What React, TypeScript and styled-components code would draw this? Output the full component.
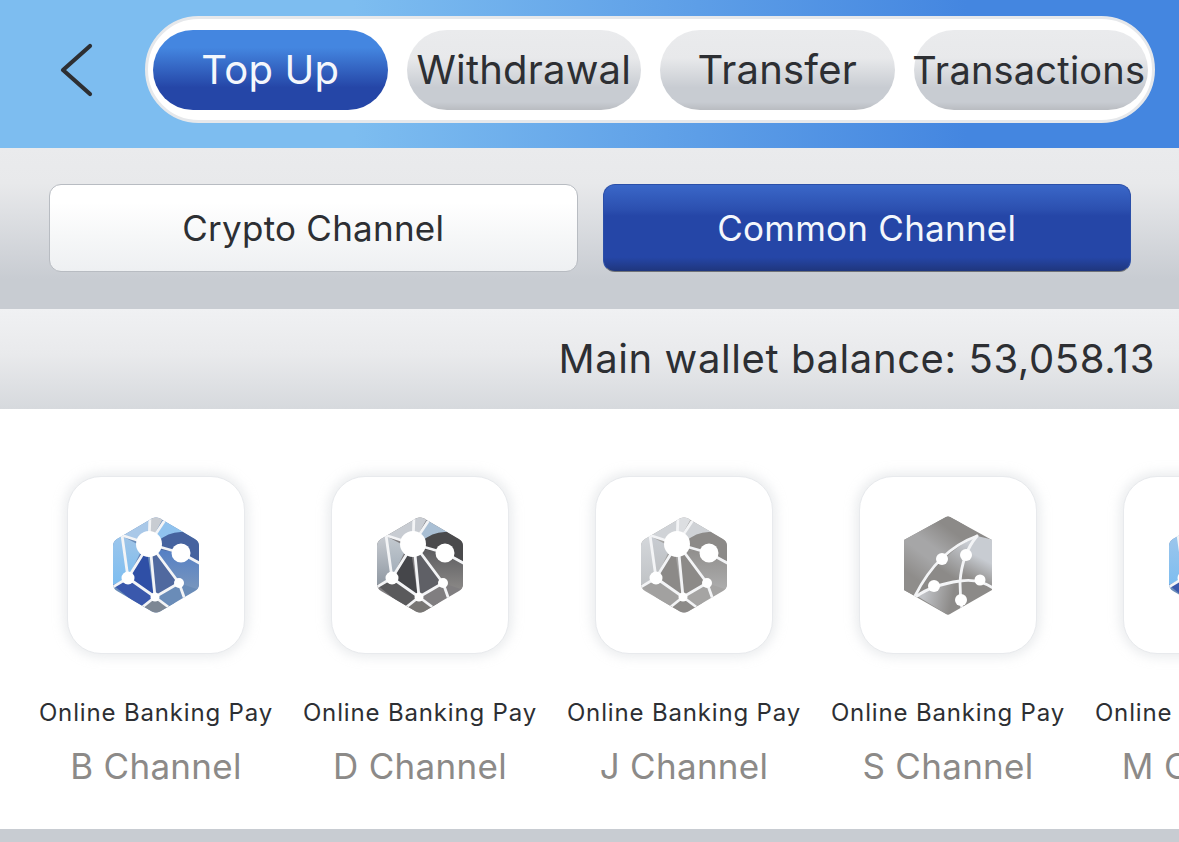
import React from "react";
import styled, { createGlobalStyle } from "styled-components";

const Global = createGlobalStyle`
  html, body { margin: 0; padding: 0; background: #c8ccd2; }
  * { box-sizing: border-box; }
  body { font-family: Inter, "Noto Sans", "Liberation Sans", sans-serif; overflow: hidden; }
`;

const Page = styled.div`
  width: 1179px;
  height: 842px;
  overflow: hidden;
  display: flex;
  flex-direction: column;
  background: #c8ccd2;
`;

const Header = styled.header`
  height: 148px;
  flex: none;
  display: flex;
  align-items: center;
  padding: 16px 24px 25px 59px;
  gap: 52px;
  background: linear-gradient(90deg, #7dbdf0 0%, #7dbdf0 30%, #4486e0 82%, #4486e0 100%);
`;

const BackIcon = styled.svg`
  width: 34px;
  height: 54px;
  flex: none;
`;

const TabBar = styled.nav`
  width: 1010px;
  height: 107px;
  flex: none;
  display: grid;
  grid-template-columns: repeat(4, minmax(0, 1fr));
  gap: 19px;
  padding: 11px 4px 10px 5px;
  background: #fff;
  border: 3px solid #e6e8eb;
  border-radius: 54px;
`;

const Tab = styled.div<{ $active?: boolean; $compact?: boolean }>`
  border-radius: 40px;
  display: flex;
  align-items: center;
  justify-content: center;
  white-space: nowrap;
  font-size: ${(p) => (p.$compact ? "38px" : "40px")};
  line-height: 1;
  padding-right: ${(p) => (p.$compact ? "4px" : "0")};
  letter-spacing: 0.2px;
  color: ${(p) => (p.$active ? "#f4f7fc" : "#2d2f33")};
  background: ${(p) =>
    p.$active
      ? "linear-gradient(180deg, #4486e0 0%, #4486e0 22%, #2546a7 72%, #2546a7 100%)"
      : "linear-gradient(180deg, #eaebed 0%, #e8e9eb 35%, #c8ccd2 72%, #c8ccd2 90%, #b9bcc1 100%)"};
`;

const ChannelBar = styled.section`
  height: 160px;
  flex: none;
  display: grid;
  grid-template-columns: 1fr 1fr;
  gap: 25px;
  padding: 36px 48px 36px 49px;
  background: linear-gradient(180deg, #eaebed 0%, #e8e9eb 22%, #c8ccd2 82%, #c8ccd2 100%);
`;

const ChannelButton = styled.div<{ $active?: boolean }>`
  border-radius: 12px;
  display: flex;
  align-items: center;
  justify-content: center;
  font-size: 35px;
  line-height: 1;
  padding-top: 1px;
  letter-spacing: 0.25px;
  color: ${(p) => (p.$active ? "#f4f7fc" : "#2d2f33")};
  border: 1px solid ${(p) => (p.$active ? "#2b4fa8" : "#b8bcc2")};
  border-bottom-color: ${(p) => (p.$active ? "#6f7278" : "#b8bcc2")};
  background: ${(p) =>
    p.$active
      ? "linear-gradient(180deg, #3a67c8 0%, #2c50b0 28%, #2546a7 36%, #2546a7 84%, #1f367d 100%)"
      : "linear-gradient(180deg, #ffffff 0%, #ffffff 20%, #f6f7f8 60%, #eef0f2 100%)"};
`;

const BalanceBar = styled.section`
  height: 100px;
  flex: none;
  display: flex;
  align-items: center;
  justify-content: flex-end;
  padding: 0 24px 2px 0;
  margin-top: 1px;
  font-size: 40px;
  letter-spacing: 0.6px;
  color: #2d2f33;
  background: linear-gradient(180deg, #f0f1f3 0%, #e9eaec 45%, #d6d9dd 100%);
`;

const ChannelList = styled.section`
  height: 420px;
  flex: none;
  display: grid;
  grid-template-columns: repeat(5, 264px);
  padding: 67px 0 0 24px;
  background: #fff;
  overflow: hidden;
`;

const ChannelItem = styled.article`
  display: flex;
  flex-direction: column;
  align-items: center;
`;

const IconCard = styled.div`
  width: 178px;
  height: 178px;
  display: flex;
  align-items: center;
  justify-content: center;
  background: #fff;
  border: 1px solid #e8eaed;
  border-radius: 34px;
  box-shadow: 0 0 12px 3px rgba(200, 204, 210, 0.4);
`;

const ChannelType = styled.div`
  margin-top: 44px;
  font-size: 24px;
  line-height: 30px;
  letter-spacing: 0.84px;
  white-space: nowrap;
  color: #2d2f33;
`;

const ChannelName = styled.div`
  margin-top: 18px;
  font-size: 35px;
  line-height: 40px;
  letter-spacing: 0.3px;
  white-space: nowrap;
  color: #8c8a88;
`;

type Palette = {
  top: string;
  corner: string;
  upperRight: string;
  left: [string, string];
  inner: [string, string];
  center: string;
  centerRight: string;
  ring: string;
  right: [string, string];
  lowerLeft: string;
  lowerRight: string;
  bottom: string;
};

const palettes: Record<string, Palette> = {
  blue: {
    top: "#c8ccd2",
    corner: "#a9c8e8",
    upperRight: "#8fc2ee",
    left: ["#9cc6ec", "#7dbdf0"],
    inner: ["#a0c4e6", "#7dbdf0"],
    center: "#2f4fa6",
    centerRight: "#50699f",
    ring: "#46639f",
    right: ["#4f7cc6", "#7a97bd"],
    lowerLeft: "#3a58ac",
    lowerRight: "#6a8cb8",
    bottom: "#7d8794",
  },
  dark: {
    top: "#c8ccd2",
    corner: "#c8ccd2",
    upperRight: "#a9bfd4",
    left: ["#c8ccd2", "#8f98a2"],
    inner: ["#c4cad0", "#9eaab6"],
    center: "#45464a",
    centerRight: "#5f6066",
    ring: "#4a4a4c",
    right: ["#56565a", "#8c8a88"],
    lowerLeft: "#5a5a5c",
    lowerRight: "#807e80",
    bottom: "#787674",
  },
  grey: {
    top: "#dcdee1",
    corner: "#d0d3d7",
    upperRight: "#cfd2d6",
    left: ["#d4d7db", "#c0c3c6"],
    inner: ["#c8ccd2", "#bdbfc1"],
    center: "#8c8a88",
    centerRight: "#8c8a88",
    ring: "#8c8a88",
    right: ["#8c8a88", "#aeaeae"],
    lowerLeft: "#a2a1a0",
    lowerRight: "#a5a4a3",
    bottom: "#8c8a88",
  },
};

const HEX_PATH =
  "M39 1.5 Q43 -0.5 47 1.5 L82 22 Q86 24.5 86 29 L86 67 Q86 71.5 82 74 L47 94.5 Q43 96.5 39 94.5 L4 74 Q0 71.5 0 67 L0 29 Q0 24.5 4 22 Z";

const MeshIcon: React.FC<{ id: string; palette: Palette }> = ({ id, palette: p }) => (
  <svg width="86" height="96" viewBox="0 0 86 96" aria-hidden="true">
    <defs>
      <clipPath id={`${id}-clip`}>
        <path d={HEX_PATH} />
      </clipPath>
      <linearGradient id={`${id}-left`} x1="0" y1="0" x2="0" y2="1">
        <stop offset="0" stopColor={p.left[0]} />
        <stop offset="1" stopColor={p.left[1]} />
      </linearGradient>
      <linearGradient id={`${id}-inner`} x1="0" y1="0" x2="0" y2="1">
        <stop offset="0" stopColor={p.inner[0]} />
        <stop offset="1" stopColor={p.inner[1]} />
      </linearGradient>
      <linearGradient id={`${id}-right`} x1="0" y1="0" x2="0" y2="1">
        <stop offset="0" stopColor={p.right[0]} />
        <stop offset="1" stopColor={p.right[1]} />
      </linearGradient>
    </defs>
    <g clipPath={`url(#${id}-clip)`}>
      <rect width="86" height="96" fill={p.lowerRight} />
      <polygon points="0,20 38,-2 36,27 9,19" fill={p.corner} />
      <polygon points="38,-2 52,-2 36,27" fill={p.top} />
      <polygon points="52,0 72,14 46,24 40,20" fill={p.upperRight} />
      <polygon points="0,20 9,19 15,61 0,68" fill={`url(#${id}-left)`} />
      <polygon points="9,19 30,30 15,61" fill={`url(#${id}-inner)`} />
      <path d="M44 25 Q56 14 70 15 L90 27 L90 46 L68 36 L47 33 Z" fill={p.ring} />
      <polygon points="47,33 68,36 90,46 90,74 66,66 36,27" fill={`url(#${id}-right)`} />
      <polygon points="33,27 41,80 15,61" fill={p.center} />
      <polygon points="36,27 66,66 42,80" fill={p.centerRight} />
      <polygon points="0,68 15,61 42,80 27,90" fill={p.lowerLeft} />
      <polygon points="27,90 42,80 58,90 43,100" fill={p.bottom} />
      <polygon points="42,80 66,66 71,76 58,90" fill={p.lowerRight} />
      <g stroke="#f3f4f6" strokeWidth="2.8" fill="none" strokeLinecap="round">
        <line x1="36" y1="27" x2="37" y2="-2" />
        <line x1="36" y1="27" x2="52" y2="3" />
        <line x1="36" y1="27" x2="8" y2="18" />
        <line x1="0" y1="21" x2="9" y2="18" />
        <line x1="9" y1="18" x2="15" y2="61" />
        <line x1="36" y1="27" x2="15" y2="61" />
        <line x1="37" y1="27" x2="42" y2="80" />
        <line x1="37" y1="27" x2="66" y2="66" />
        <line x1="40" y1="28" x2="68" y2="36" />
        <line x1="68" y1="36" x2="90" y2="48" />
        <line x1="15" y1="61" x2="42" y2="80" />
        <line x1="42" y1="80" x2="66" y2="66" />
        <line x1="15" y1="61" x2="-2" y2="71" />
        <line x1="42" y1="80" x2="27" y2="92" />
        <line x1="42" y1="80" x2="58" y2="92" />
        <line x1="66" y1="66" x2="71" y2="80" />
      </g>
      <g fill="#ffffff">
        <circle cx="36" cy="27" r="13" />
        <circle cx="68" cy="36" r="9.5" />
        <circle cx="15" cy="61" r="6.5" />
        <circle cx="66" cy="66" r="5" />
        <circle cx="42" cy="80" r="4.5" />
      </g>
    </g>
  </svg>
);

const SCurveIcon: React.FC = () => (
  <svg width="88" height="99" viewBox="0 0 88 99" aria-hidden="true">
    <defs>
      <clipPath id="s-clip">
        <path d="M42 1 Q44 0 46 1 L88 24 L88 74 L46 98 Q44 99 42 98 L0 74 L0 24 Z" />
      </clipPath>
      <linearGradient id="s-band" gradientUnits="userSpaceOnUse" x1="44" y1="12" x2="8" y2="60">
        <stop offset="0" stopColor="#8c8a88" />
        <stop offset="0.4" stopColor="#a6a6a7" />
        <stop offset="0.6" stopColor="#a6a6a7" />
        <stop offset="1" stopColor="#8f8d8b" />
      </linearGradient>
      <linearGradient id="s-right" gradientUnits="userSpaceOnUse" x1="80" y1="26" x2="62" y2="60">
        <stop offset="0" stopColor="#c8ccd2" />
        <stop offset="0.4" stopColor="#c8ccd2" />
        <stop offset="1" stopColor="#8f8d8b" />
      </linearGradient>
      <linearGradient id="s-mid" gradientUnits="userSpaceOnUse" x1="65" y1="28" x2="42" y2="62">
        <stop offset="0" stopColor="#c8ccd2" />
        <stop offset="0.9" stopColor="#8c8a88" />
      </linearGradient>
      <linearGradient id="s-low" gradientUnits="userSpaceOnUse" x1="20" y1="78" x2="48" y2="84">
        <stop offset="0" stopColor="#c0c2c6" />
        <stop offset="1" stopColor="#8c8a88" />
      </linearGradient>
    </defs>
    <g clipPath="url(#s-clip)">
      <rect width="88" height="99" fill="#8c8a88" />
      <path d="M-2 74 L-2 22 L44 -2 L74 18 Q32 34 12 80 Z" fill="url(#s-band)" />
      <path d="M73 20 Q38 36 13 79 Q30 68 56 65 Q58 38 73 20 Z" fill="url(#s-mid)" />
      <path d="M73 20 L90 24 L90 72 Q72 63 56 65 Q58 38 73 20 Z" fill="url(#s-right)" />
      <path d="M13 80 Q32 68 56 65 L56 90 L44 99 Z" fill="url(#s-low)" />
      <g stroke="#f3f4f6" strokeWidth="2.8" fill="none" strokeLinecap="round">
        <path d="M73 20 Q34 34 11 80" />
        <path d="M73 20 Q58 38 56 66 Q56 80 58 93" />
        <path d="M13 80 Q28 69 56 65 Q74 62 89 72" />
      </g>
      <g fill="#ffffff">
        <circle cx="38" cy="43" r="6" />
        <circle cx="62" cy="39" r="6" />
        <circle cx="30" cy="70" r="6" />
        <circle cx="76" cy="64" r="5.5" />
        <circle cx="57" cy="84" r="6" />
      </g>
    </g>
  </svg>
);

const tabs = [
  { label: "Top Up", active: true },
  { label: "Withdrawal" },
  { label: "Transfer" },
  { label: "Transactions", compact: true },
];

const channels: { name: string; icon: React.ReactNode }[] = [
  { name: "B Channel", icon: <MeshIcon id="b" palette={palettes.blue} /> },
  { name: "D Channel", icon: <MeshIcon id="d" palette={palettes.dark} /> },
  { name: "J Channel", icon: <MeshIcon id="j" palette={palettes.grey} /> },
  { name: "S Channel", icon: <SCurveIcon /> },
  { name: "M Channel", icon: <MeshIcon id="m" palette={palettes.blue} /> },
];

export default function App() {
  return (
    <Page>
      <Global />
      <Header>
        <BackIcon viewBox="0 0 34 54" aria-hidden="true">
          <path d="M31 3 L4 27 L31 51" fill="none" stroke="#2d2f33" strokeWidth="4.2" strokeLinecap="round" strokeLinejoin="round" />
        </BackIcon>
        <TabBar>
          {tabs.map((t) => (
            <Tab key={t.label} $active={t.active} $compact={t.compact}>
              {t.label}
            </Tab>
          ))}
        </TabBar>
      </Header>
      <ChannelBar>
        <ChannelButton>Crypto Channel</ChannelButton>
        <ChannelButton $active>Common Channel</ChannelButton>
      </ChannelBar>
      <BalanceBar>Main wallet balance: 53,058.13</BalanceBar>
      <ChannelList>
        {channels.map((c) => (
          <ChannelItem key={c.name}>
            <IconCard>{c.icon}</IconCard>
            <ChannelType>Online Banking Pay</ChannelType>
            <ChannelName>{c.name}</ChannelName>
          </ChannelItem>
        ))}
      </ChannelList>
    </Page>
  );
}
